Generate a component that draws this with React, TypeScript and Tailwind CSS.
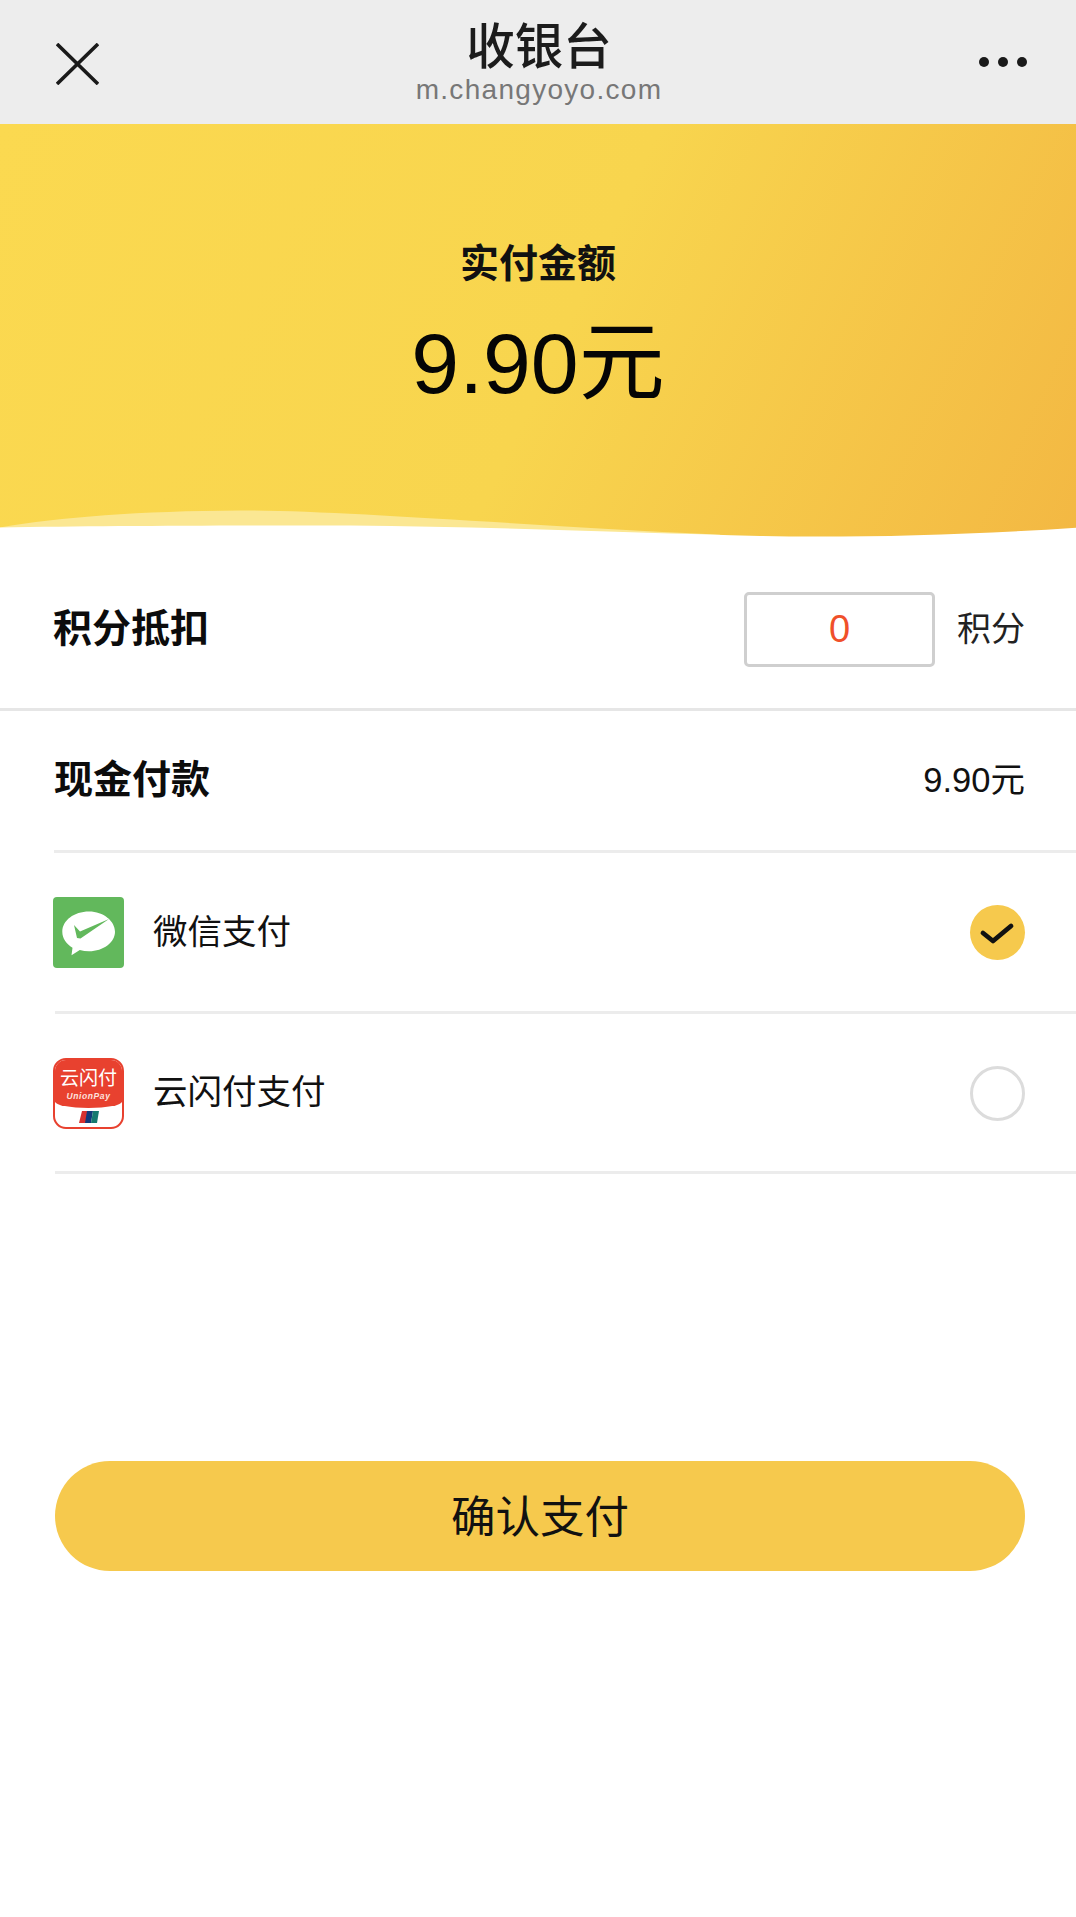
const sans = "font-['Liberation_Sans','Noto_Sans_CJK_SC',sans-serif]";

function WechatIcon() {
  return (
    <span className="block h-[71px] w-[71px] shrink-0 rounded-[4px] bg-[#62b85c]">
      <svg viewBox="0 0 71 71" className="h-[71px] w-[71px]">
        <path d="M36 14.500C21 14.500 9.300 23.500 9.300 34.700c0 6.500 4 12.300 10.200 16l-1 7.500 8.300-5.200c3 .8 6 1.200 9.200 1.200 14.500 0 26-9 26-19.500S50.500 14.500 36 14.500z" fill="#fff" />
        <path d="M21 28l6 6.500L56 22 27.500 41.500 24 41z" fill="#62b85c" />
      </svg>
    </span>
  );
}

function UnionPayIcon() {
  return (
    <span className="flex h-[71px] w-[71px] shrink-0 flex-col overflow-hidden rounded-[13px] border-2 border-[#e8412f] bg-white">
      <span className="flex h-[48px] flex-col items-center rounded-b-[36px_7px] bg-[#e8412f] pt-[8px] text-white">
        <span className="text-[19px] leading-[21px] whitespace-nowrap">云闪付</span>
        <span className="mt-[3px] text-[8.500px] leading-[9px] tracking-[0.6px] font-bold italic text-[#fde3df]">UnionPay</span>
      </span>
      <span className="flex flex-1 items-start justify-center pt-[3px]">
        <svg viewBox="0 0 20 12" className="h-[12px] w-[20px]">
          <path d="M3 0h6L7 12H0z" fill="#d8312f" />
          <path d="M8 0h6l-2 12H6z" fill="#123a7a" />
          <path d="M14 0h6l-2 12h-6z" fill="#16796f" />
        </svg>
      </span>
    </span>
  );
}

function PayRow({ icon, name, selected }: { icon: React.ReactNode; name: string; selected?: boolean }) {
  return (
    <div className="ml-[55px] flex h-[160.500px] items-center border-b-[3px] border-[#ececec] pr-[51px] pt-[2px]">
      <div className="-ml-[2px] flex flex-1 items-center gap-[29px]">
        {icon}
        <span className="text-[34.500px] text-[#111]">{name}</span>
      </div>
      {selected ? (
        <span className="flex h-[55px] w-[55px] items-center justify-center rounded-full bg-[#f6c94d]">
          <svg viewBox="0 0 55 55" className="h-[55px] w-[55px]">
            <path d="M13 28l10 8L41 21" fill="none" stroke="#111" strokeWidth="4.800" strokeLinecap="round" strokeLinejoin="round" />
          </svg>
        </span>
      ) : (
        <span className="h-[55px] w-[55px] rounded-full border-[3px] border-[#dcdcdc]" />
      )}
    </div>
  );
}

export default function App() {
  return (
    <div className={`min-h-[1917px] w-full bg-white ${sans}`}>
      {/* title bar */}
      <header className="flex h-[124px] items-start justify-between bg-[#ededed] pl-[56px] pr-[49px]">
        <svg viewBox="0 0 43 42" className="mt-[43px] h-[42px] w-[43px]">
          <path d="M1 1l41 40M42 1L1 41" stroke="#1a1a1a" strokeWidth="3.600" fill="none" />
        </svg>
        <div className="flex flex-col items-center pt-[19px]">
          <span className="text-[48.500px] leading-[56px] font-medium text-[#1c1c1c]">收银台</span>
          <span className="text-[28px] leading-[30px] tracking-[1.300px] text-[#777]">m.changyoyo.com</span>
        </div>
        <div className="mt-[57px] flex gap-[9px]">
          <span className="h-[10px] w-[10px] rounded-full bg-[#1a1a1a]" />
          <span className="h-[10px] w-[10px] rounded-full bg-[#1a1a1a]" />
          <span className="h-[10px] w-[10px] rounded-full bg-[#1a1a1a]" />
        </div>
      </header>

      {/* amount banner */}
      <section className="relative flex h-[416px] flex-col items-center bg-[linear-gradient(115deg,#fbd950_0%,#f8d54e_52%,#f3b843_100%)] pt-[115px]">
        <span className="text-[39px] leading-[50px] font-bold text-[#111]">实付金额</span>
        <span className="mt-[24px] text-[86px] leading-[100px] text-[#050505]">9.90元</span>
        <svg viewBox="0 0 1076 40" preserveAspectRatio="none" className="absolute bottom-0 left-0 h-[40px] w-full">
          <path d="M0 27.500C60 17 140 11 240 10.500c100 0 260 13.500 480 24.300V40H0z" fill="#fbe793" />
          <path d="M0 27.500C100 26 200 25.500 350 25.500c150 1.500 290 7.500 410 10.500 90 2 210-1 316-8.300V40H0z" fill="#fff" />
        </svg>
      </section>

      {/* points */}
      <div className="flex h-[171px] items-center justify-between border-b-[3px] border-[#e6e6e6] pl-[53px] pr-[51px] pt-[10px]">
        <span className="text-[39px] font-bold text-[#0c0c0c]">积分抵扣</span>
        <div className="flex items-center gap-[22px]">
          <div className="flex h-[75px] w-[191px] items-center justify-center rounded-[5px] border-[3px] border-[#cfcfcf] text-[38px] text-[#f0502a]">0</div>
          <span className="text-[34px] text-[#222]">积分</span>
        </div>
      </div>

      {/* cash */}
      <div className="ml-[54px] flex h-[142px] items-center justify-between border-b-[3px] border-[#ececec] pr-[51px]">
        <span className="text-[39px] font-bold text-[#0c0c0c]">现金付款</span>
        <span className="text-[34.500px] text-[#111]">9.90元</span>
      </div>

      <PayRow icon={<WechatIcon />} name="微信支付" selected />
      <PayRow icon={<UnionPayIcon />} name="云闪付支付" />

      <div className="mt-[287px] pl-[55px] pr-[51px]">
        <button className="h-[110px] w-full rounded-[55px] bg-[#f6c94d] pt-[4px] text-[44.500px] text-[#111]">确认支付</button>
      </div>
    </div>
  );
}
